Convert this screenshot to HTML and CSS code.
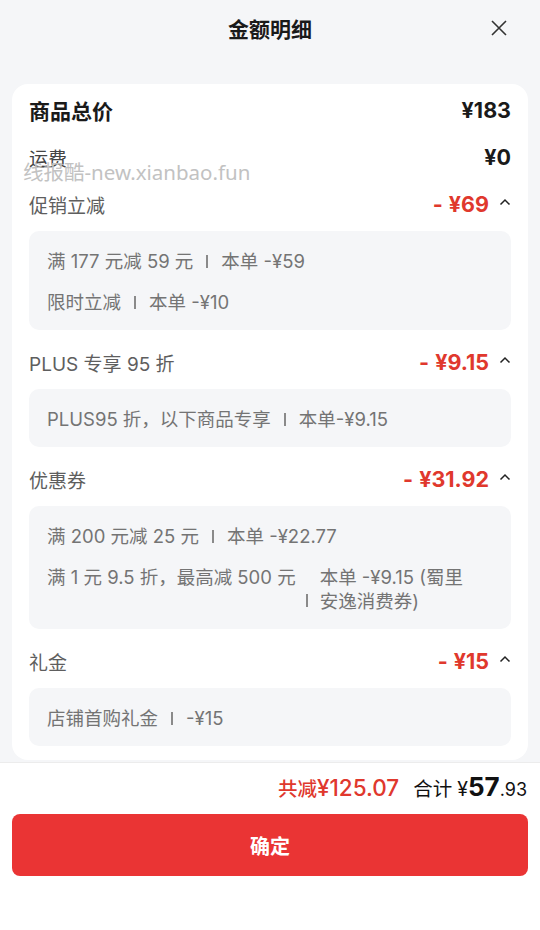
FILE: index.html
```html
<!DOCTYPE html>
<html lang="zh">
<head>
<meta charset="utf-8">
<link rel="stylesheet" href="styles.css">
</head>
<body>
<div class="sheet">
  <div class="header">
    <div class="title">金额明细</div>
    <svg class="close" width="18" height="18" viewBox="0 0 18 18"><path d="M2 2 L16 16 M16 2 L2 16" stroke="#333" stroke-width="1.6" fill="none"/></svg>
  </div>
  <div class="card">
    <div class="row total">
      <span class="lbl-main">商品总价</span>
      <span class="amt-main">¥183</span>
    </div>
    <div class="row ship">
      <span class="lbl-ship">运费</span>
      <span class="amt-main">¥0</span>
    </div>
    <div class="watermark">线报酷-new.xianbao.fun</div>

    <div class="row sec">
      <span class="lbl">促销立减</span>
      <span class="amt-red"><span class="minus">-</span>¥69<svg class="chev" width="12" height="8" viewBox="0 0 12 8"><polyline points="1.5,6.5 6,2 10.5,6.5" stroke="#222" stroke-width="1.5" fill="none"/></svg></span>
    </div>
    <div class="box">
      <div class="item">满 177 元减 59 元<span class="sep"></span>本单 -¥59</div>
      <div class="item">限时立减<span class="sep"></span>本单 -¥10</div>
    </div>

    <div class="row sec">
      <span class="lbl">PLUS 专享 95 折</span>
      <span class="amt-red"><span class="minus">-</span>¥9.15<svg class="chev" width="12" height="8" viewBox="0 0 12 8"><polyline points="1.5,6.5 6,2 10.5,6.5" stroke="#222" stroke-width="1.5" fill="none"/></svg></span>
    </div>
    <div class="box">
      <div class="item">PLUS95 折，以下商品专享<span class="sep"></span>本单-¥9.15</div>
    </div>

    <div class="row sec">
      <span class="lbl">优惠券</span>
      <span class="amt-red"><span class="minus">-</span>¥31.92<svg class="chev" width="12" height="8" viewBox="0 0 12 8"><polyline points="1.5,6.5 6,2 10.5,6.5" stroke="#222" stroke-width="1.5" fill="none"/></svg></span>
    </div>
    <div class="box">
      <div class="item">满 200 元减 25 元<span class="sep"></span>本单 -¥22.77</div>
      <div class="item split">
        <span class="left">满 1 元 9.5 折，最高减 500 元</span>
        <span class="sep low"></span>
        <span class="right">本单 -¥9.15 (蜀里安逸消费券)</span>
      </div>
    </div>

    <div class="row sec">
      <span class="lbl">礼金</span>
      <span class="amt-red"><span class="minus">-</span>¥15<svg class="chev" width="12" height="8" viewBox="0 0 12 8"><polyline points="1.5,6.5 6,2 10.5,6.5" stroke="#222" stroke-width="1.5" fill="none"/></svg></span>
    </div>
    <div class="box last">
      <div class="item">店铺首购礼金<span class="sep"></span>-¥15</div>
    </div>
  </div>
  <div class="footer">
    <div class="sum">
      <span class="saved"><span class="saved-l">共减</span>¥125.07</span>
      <span class="pay"><span class="pay-l">合计</span><span class="yen">¥</span><span class="big">57</span><span class="dec">.93</span></span>
    </div>
    <button class="confirm">确定</button>
  </div>
</div>
</body>
</html>
```

FILE: styles.css
```css
* { box-sizing: border-box; }
html, body {
  margin: 0;
  padding: 0;
  background: #f5f6f8;
  font-family: Inter, "Noto Sans CJK SC", sans-serif;
}
.sheet {
  width: 540px;
  height: 930px;
  background: #f5f6f8;
  display: flex;
  flex-direction: column;
  overflow: hidden;
}
.header {
  position: relative;
  height: 84px;
  display: flex;
  justify-content: center;
  padding-top: 16px;
}
.title {
  font-size: 21px;
  font-weight: 700;
  color: #1a1a1a;
  line-height: 28px;
}
.close {
  position: absolute;
  right: 32px;
  top: 19px;
}
.card {
  position: relative;
  margin: 0 12px;
  background: #fff;
  border-radius: 16px;
  padding: 13px 17px 12px;
  height: 676px;
}
.row {
  display: flex;
  justify-content: space-between;
  align-items: center;
  height: 26px;
}
.row.total { margin-bottom: 21px; }
.row.ship { margin-bottom: 21px; }
.row.sec { margin-bottom: 14px; }
.lbl-main {
  font-size: 21px;
  font-weight: 700;
  color: #1a1a1a;
}
.amt-main {
  font-size: 21.5px;
  font-weight: 700;
  color: #1a1a1a;
}
.lbl-ship {
  font-size: 19px;
  color: #444;
}
.lbl {
  font-size: 19px;
  color: #5e5e5e;
}
.amt-red {
  display: flex;
  align-items: center;
  font-size: 21.5px;
  font-weight: 700;
  color: #e0382d;
}
.minus { margin-right: 6px; }
.chev {
  margin-left: 10px;
  margin-top: -4px;
}
.watermark {
  position: absolute;
  left: 11px;
  top: 75px;
  font-size: 20.5px;
  color: #c2c2c2;
  line-height: 26px;
  font-family: "Noto Sans", "Noto Sans CJK SC", sans-serif;
}
.box {
  background: #f5f6f8;
  border-radius: 10px;
  padding: 18px 18px 16px;
  display: flex;
  flex-direction: column;
  gap: 17px;
  margin-bottom: 19px;
}
.box.last { margin-bottom: 0; }
.item {
  font-size: 18.5px;
  line-height: 24px;
  color: #747474;
  display: flex;
  align-items: center;
  white-space: pre;
}
.sep {
  display: inline-block;
  width: 2px;
  height: 13px;
  background: #8a8a8a;
  margin: 0 13px;
  flex: none;
}
.item.split { align-items: flex-start; white-space: normal; }
.left { flex: none; white-space: nowrap; }
.sep.low { align-self: flex-end; margin: 0 12px 6px 10px; }
.right { flex: 1 1 0; min-width: 0; padding-right: 14px; }
.footer {
  margin-top: 2px;
  flex: 1;
  background: #fff;
  border-top: 1px solid #ececec;
  padding: 8px 12px 0;
}
.sum {
  display: flex;
  justify-content: flex-end;
  align-items: baseline;
  height: 32px;
  padding-right: 1px;
}
.saved {
  color: #e0382d;
  font-size: 22.5px;
  font-weight: 500;
  margin-right: 14px;
}
.saved-l { font-size: 19.5px; }
.pay { color: #111; }
.pay-l { font-size: 19.5px; margin-right: 5px; }
.yen { font-size: 19.5px; }
.big { font-size: 26px; font-weight: 700; }
.dec { font-size: 18px; }
.confirm {
  display: block;
  width: 100%;
  height: 62px;
  margin-top: 11px;
  border: none;
  border-radius: 8px;
  background: #ea3434;
  color: #fff;
  font-family: "Noto Sans CJK SC", sans-serif;
  font-size: 20px;
  font-weight: 700;
}
```
